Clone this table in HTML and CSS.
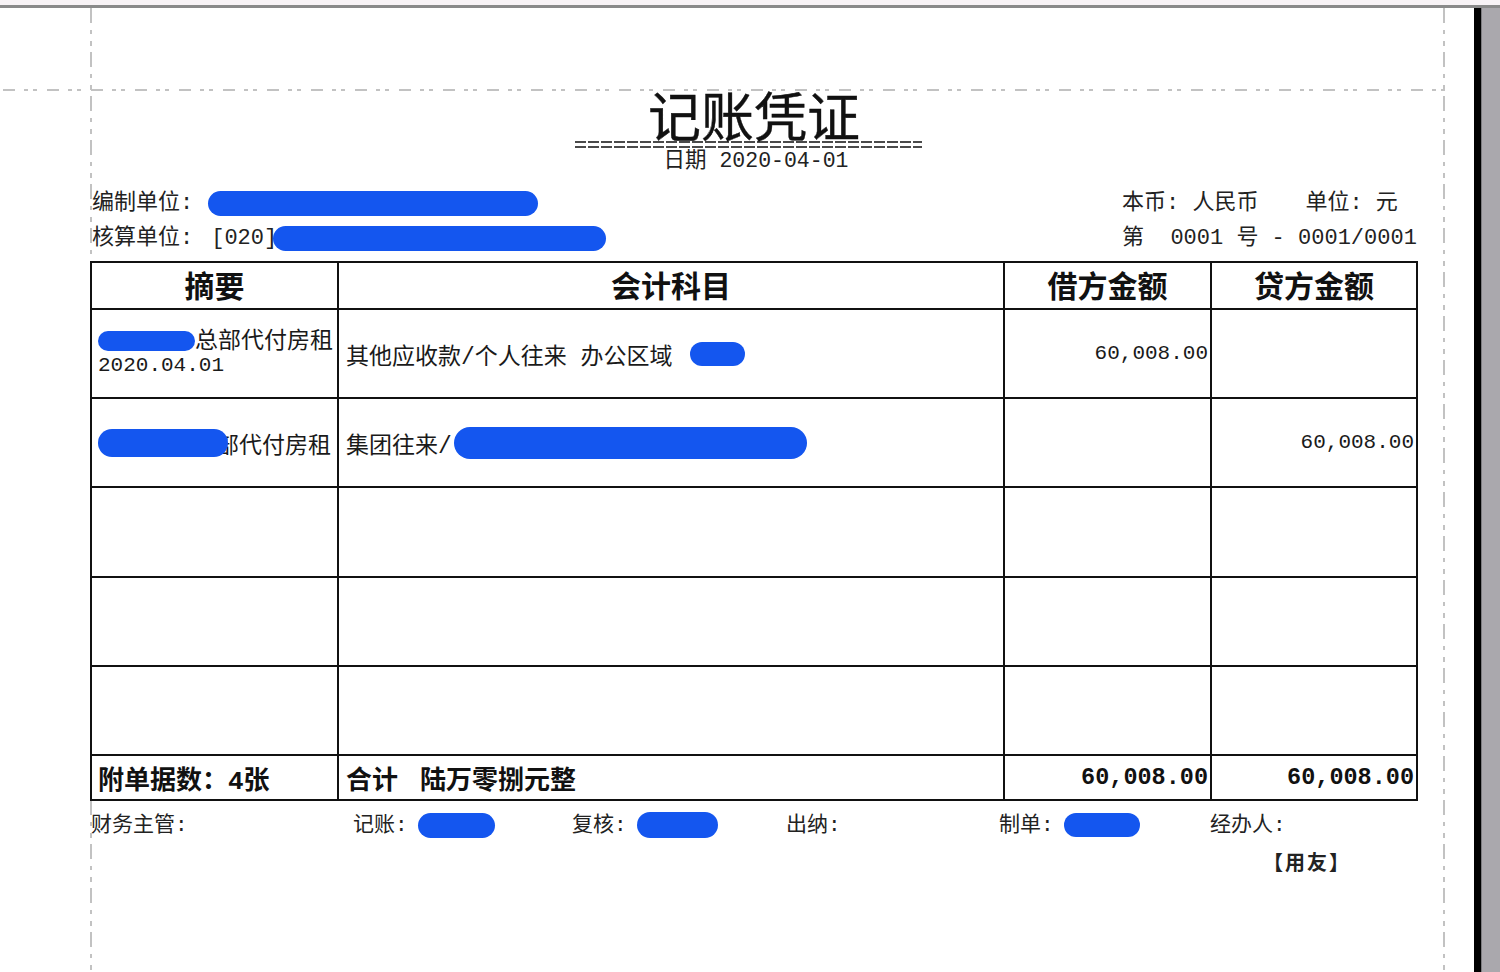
FILE: index.html
```html
<!DOCTYPE html>
<html lang="zh-CN">
<head>
<meta charset="utf-8">
<title>记账凭证</title>
<link rel="stylesheet" href="styles.css">
</head>
<body>
<div class="topbar"></div>
<div class="viewport">
  <div class="page">
    <div class="guide guide-h"></div>
    <div class="guide guide-v guide-vl"></div>
    <div class="guide guide-v guide-vr"></div>
    <div class="sheet">
      <div class="title">记账凭证</div>
      <div class="title-rule"></div>
      <div class="date">日期 2020-04-01</div>
      <div class="info">
        <div class="info-left">
          <div class="info-line">编制单位: <span class="blob b-unit1"></span></div>
          <div class="info-line">核算单位:<span class="gap-s"></span>[020]<span class="blob b-unit2"></span></div>
        </div>
        <div class="info-right">
          <div class="info-line">本币: 人民币<span class="gap"></span>单位: 元</div>
          <div class="info-line">第  0001 号 - 0001/0001</div>
        </div>
      </div>

      <div class="voucher">
        <div class="cell head">摘要</div>
        <div class="cell head">会计科目</div>
        <div class="cell head">借方金额</div>
        <div class="cell head">贷方金额</div>

        <div class="cell desc">
          <div class="desc-lines">
            <div class="dl"><span class="blob b-d1"></span>总部代付房租</div>
            <div class="dl num">2020.04.01</div>
          </div>
        </div>
        <div class="cell acct">其他应收款/个人往来 办公区域 <span class="blob b-a1"></span></div>
        <div class="cell amt"><span class="num">60,008.00</span></div>
        <div class="cell amt"></div>

        <div class="cell desc"><span class="blob b-d2"></span>部代付房租</div>
        <div class="cell acct">集团往来/<span class="blob b-a2"></span></div>
        <div class="cell amt"></div>
        <div class="cell amt"><span class="num">60,008.00</span></div>

        <div class="cell"></div><div class="cell"></div><div class="cell"></div><div class="cell"></div>
        <div class="cell"></div><div class="cell"></div><div class="cell"></div><div class="cell"></div>
        <div class="cell"></div><div class="cell"></div><div class="cell"></div><div class="cell"></div>

        <div class="cell foot desc">附单据数：4张</div>
        <div class="cell foot acct">合计<span class="gap-f"></span>陆万零捌元整</div>
        <div class="cell foot amt"><span class="num-b">60,008.00</span></div>
        <div class="cell foot amt"><span class="num-b">60,008.00</span></div>
      </div>

      <div class="signs">
        <div class="sign">财务主管:</div>
        <div class="sign">记账: <span class="blob b-s1"></span></div>
        <div class="sign">复核: <span class="blob b-s2"></span></div>
        <div class="sign">出纳:</div>
        <div class="sign">制单: <span class="blob b-s3"></span></div>
        <div class="sign">经办人:</div>
      </div>
      <div class="brand">【用友】</div>
    </div>
  </div>
  <div class="edge"></div>
  <div class="gutter"></div>
</div>
</body>
</html>
```

FILE: styles.css
```css
* { box-sizing: border-box; margin: 0; padding: 0; }
html, body { width: 1500px; height: 972px; overflow: hidden; }
body {
  background: #fff;
  font-family: "Liberation Mono", "Noto Sans CJK SC", monospace;
  color: #1a1a1a;
}

.topbar {
  height: 8px;
  background: #f8f3f6;
  border-bottom: 3px solid #8a8a8a;
}

.viewport { display: flex; height: 964px; }
.page { position: relative; width: 1474px; background: #fff; overflow: hidden; }
.edge { width: 7px; background: #000; }
.gutter { flex: 1; background: #aaa8ad; border-left: 1px solid #7d7c80; }

/* dashed print guides */
.guide { position: absolute; z-index: 0; }
.guide-h {
  top: 81px; left: 0; width: 1448px; height: 2px;
  background: repeating-linear-gradient(90deg,
    transparent 0 3px, #c2c2c2 3px 15px, transparent 15px 24px,
    #c2c2c2 24px 28px, transparent 28px 33px, #c2c2c2 33px 37px, transparent 37px 44px);
}
.guide-v {
  top: 0; width: 2px; height: 964px;
  background: repeating-linear-gradient(180deg,
    #c2c2c2 0 15px, transparent 15px 22px, #c2c2c2 22px 26px,
    transparent 26px 33px, #c2c2c2 33px 38px, transparent 38px 44px);
}
.guide-vl { left: 90px; }
.guide-vr { left: 1443px; }

.sheet {
  position: relative;
  z-index: 1;
  width: 1418px;
  padding: 80px 0 0 90px;
}

.title {
  font-family: "Liberation Sans", "Noto Sans CJK SC", sans-serif;
  font-size: 53px;
  line-height: 62px;
  height: 53px;
  text-align: center;
  color: #111;
  -webkit-text-stroke: 0.4px #111;
}
.title-rule {
  width: 347px;
  height: 7px;
  margin: 0 0 0 485px;
  background:
    linear-gradient(#fff, #fff) 0 2px / 100% 3px no-repeat,
    repeating-linear-gradient(90deg, #4a4a4a 0 11px, transparent 11px 13px);
}
.date {
  margin-top: 2px;
  font-size: 21.5px;
  line-height: 22px;
  height: 22px;
  text-align: center;
  white-space: pre;
  color: #222;
  padding-left: 4px;
}

.info {
  margin-top: 14px;
  display: grid;
  grid-template-columns: 1fr 296px;
  font-size: 22px;
  color: #222;
}
.info-left { padding-left: 2px; }
.info-line { height: 35px; line-height: 35px; white-space: pre; }
.gap { display: inline-block; width: 47px; }
.gap-s { display: inline-block; width: 18px; }

.blob {
  display: inline-block;
  background: #1456ef;
  border-radius: 14px;
  vertical-align: middle;
  position: relative;
}
.b-unit1 { width: 330px; height: 25px; margin-left: 2px; }
.b-unit2 { width: 333px; height: 25px; margin-left: -4px; }
.b-d1 { width: 97px; height: 20px; border-radius: 10px; }
.b-d2 { width: 130px; height: 28px; margin-right: -12px; z-index: 1; }
.b-a1 { width: 55px; height: 24px; margin-left: 4px; border-radius: 12px; }
.b-a2 { width: 353px; height: 32px; margin-left: 2px; border-radius: 16px; }
.b-s1 { width: 77px; height: 25px; margin-left: -2px; }
.b-s2 { width: 81px; height: 26px; margin-left: -2px; }
.b-s3 { width: 76px; height: 24px; margin-left: -2px; }

/* voucher table */
.voucher {
  margin-top: 5px;
  display: grid;
  grid-template-columns: 247px 666px 207px 206px;
  grid-template-rows: 47px 89px 89px 90px 89px 89px 45px;
  border-left: 2px solid #111;
  border-top: 2px solid #111;
  width: 1328px;
}
.cell {
  border-right: 2px solid #111;
  border-bottom: 2px solid #111;
  display: flex;
  align-items: center;
  font-family: "Liberation Mono", "Noto Sans CJK SC", sans-serif;
  font-size: 23px;
  white-space: pre;
  overflow: hidden;
  color: #1a1a1a;
}
.head {
  justify-content: center;
  font-family: "Noto Sans CJK SC", sans-serif;
  font-size: 30px;
  font-weight: 700;
  color: #111;
  padding-bottom: 3px;
}
.desc { padding-left: 6px; }
.acct { padding-left: 7px; }
.amt { justify-content: flex-end; padding-right: 2px; }
.desc-lines { display: flex; flex-direction: column; }
.dl { line-height: 23px; height: 23px; }
.num {
  font-family: "Liberation Mono", monospace;
  font-size: 21px;
}
.foot {
  font-size: 26px;
  font-weight: 700;
  color: #111;
}
.gap-f { display: inline-block; width: 22px; }
.num-b {
  font-family: "Liberation Mono", monospace;
  font-size: 23.5px;
  font-weight: 700;
}

.signs {
  display: grid;
  grid-template-columns: 262px 219px 214px 213px 211px 1fr;
  padding-left: 1px;
  padding-top: 3px;
  height: 47px;
  line-height: 44px;
  font-size: 21px;
  color: #222;
}
.sign { white-space: pre; }

.brand {
  margin-top: 3px;
  padding-left: 1173px;
  font-family: "Noto Sans CJK SC", sans-serif;
  font-size: 20px;
  letter-spacing: 2px;
  line-height: 22px;
  font-weight: 700;
  color: #222;
}
```
